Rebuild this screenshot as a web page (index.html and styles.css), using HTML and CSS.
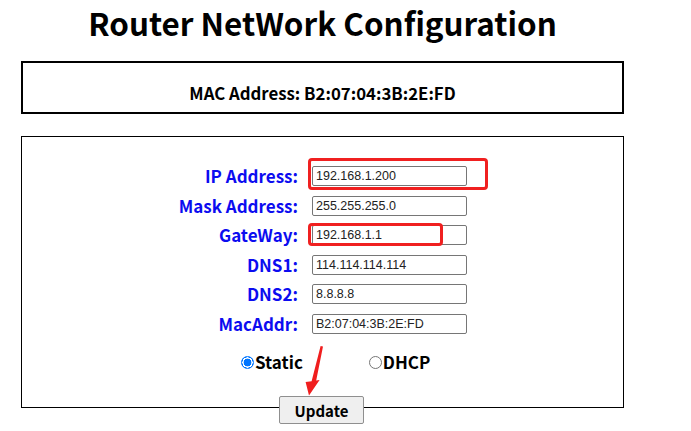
FILE: index.html
```html
<!DOCTYPE html>
<html>
<head>
<meta charset="utf-8">
<link rel="stylesheet" href="styles.css">
</head>
<body>
<div class="page">
  <h1 class="title">Router NetWork Configuration</h1>
  <div class="mac-box">MAC Address: B2:07:04:3B:2E:FD</div>
  <form class="form-box">
    <div class="fields">
      <label class="lbl">IP Address:</label><input class="inp" type="text" value="192.168.1.200">
      <label class="lbl">Mask Address:</label><input class="inp" type="text" value="255.255.255.0">
      <label class="lbl">GateWay:</label><input class="inp" type="text" value="192.168.1.1">
      <label class="lbl">DNS1:</label><input class="inp" type="text" value="114.114.114.114">
      <label class="lbl">DNS2:</label><input class="inp" type="text" value="8.8.8.8">
      <label class="lbl">MacAddr:</label><input class="inp" type="text" value="B2:07:04:3B:2E:FD">
    </div>
    <div class="modes">
      <label class="mode"><span class="radio checked"></span>Static</label>
      <label class="mode"><span class="radio"></span>DHCP</label>
    </div>
  </form>
  <div class="actions"><button class="btn" type="button">Update</button></div>

  <div class="mark mark-ip"></div>
  <div class="mark mark-gw"></div>
  <svg class="arrow" width="30" height="60" viewBox="0 0 30 60">
    <path d="M20.6 1 L23 1.6 L16.2 35.4 L19.6 35 L9 50.5 L5.6 37 L11.6 36.2 Z" fill="#f01e1e"/>
  </svg>
</div>
</body>
</html>
```

FILE: styles.css
```css
html, body {
  margin: 0;
  padding: 0;
  background: #ffffff;
}

.page {
  position: relative;
  width: 603px;
  margin-left: 21px;
  font-family: "Noto Sans CJK SC", "Open Sans", sans-serif;
  color: #000;
}

.title {
  margin: 0;
  font-size: 31.4px;
  font-weight: 700;
  line-height: 46px;
  text-align: center;
}

.mac-box {
  box-sizing: border-box;
  margin-top: 15px;
  height: 53px;
  border: 2px solid #000;
  padding-top: 20px;
  font-size: 16.8px;
  font-weight: 700;
  line-height: 20px;
  text-align: center;
}

.form-box {
  box-sizing: border-box;
  margin: 22px 0 0;
  height: 272px;
  border: 1px solid #000;
  padding-top: 29px;
}

.fields {
  display: grid;
  grid-template-columns: 276px 155px;
  column-gap: 14px;
  row-gap: 9.6px;
  grid-auto-rows: 20px;
  align-items: center;
}

.lbl {
  justify-self: end;
  color: #0c0cf0;
  font-size: 17px;
  font-weight: 700;
  line-height: 20px;
  white-space: nowrap;
}

.inp {
  box-sizing: border-box;
  width: 155px;
  height: 20px;
  margin: 0;
  padding: 0 3px;
  border: 1px solid #767676;
  border-radius: 2px;
  font-family: "Liberation Sans", Arial, sans-serif;
  font-size: 12.5px;
  color: #222;
  background: #fff;
}

.modes {
  display: flex;
  margin-top: 18px;
  padding-left: 219px;
  gap: 66px;
}

.mode {
  display: flex;
  align-items: center;
  font-size: 17px;
  font-weight: 700;
  line-height: 20px;
}

.radio {
  box-sizing: border-box;
  width: 13px;
  height: 13px;
  margin-right: 1px;
  margin-top: 2px;
  border: 1px solid #767676;
  border-radius: 50%;
  background: #fff;
}

.radio.checked {
  border: 1px solid #0075ff;
  background: radial-gradient(circle, #0075ff 0 3.6px, #fff 4.2px 5px, #0075ff 5.3px);
}

.actions {
  display: flex;
  justify-content: flex-start;
  padding-left: 258px;
  margin-top: -12px;
}

.btn {
  box-sizing: border-box;
  width: 85px;
  height: 28px;
  margin: 0;
  padding: 0;
  border: 1px solid #8f8f8f;
  border-radius: 2px;
  background: #efefef;
  font-family: "Noto Sans CJK SC", "Open Sans", sans-serif;
  font-size: 15px;
  font-weight: 700;
  color: #000;
}

.mark {
  position: absolute;
  box-sizing: border-box;
  border: 3px solid #f02020;
  border-radius: 4px;
}

.mark-ip {
  left: 287px;
  top: 158px;
  width: 180px;
  height: 32px;
}

.mark-gw {
  left: 287px;
  top: 223px;
  width: 135px;
  height: 23px;
}

.arrow {
  position: absolute;
  left: 279px;
  top: 345px;
}
```
